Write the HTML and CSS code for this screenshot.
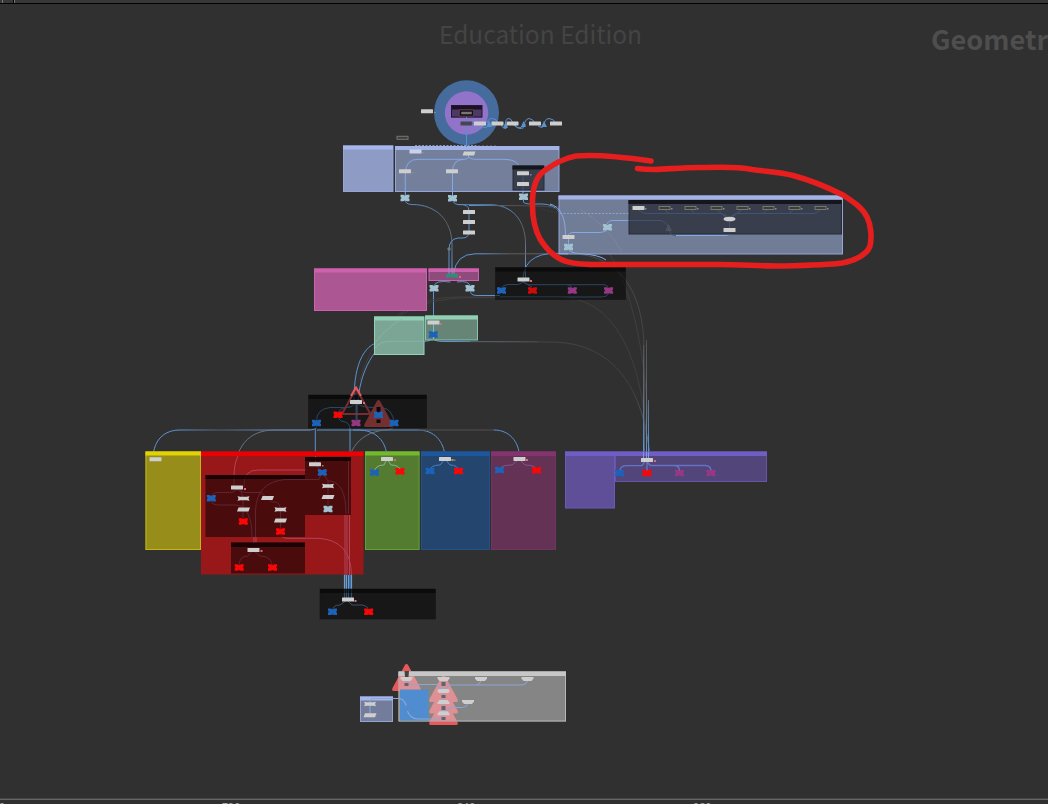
FILE: index.html
```
<!DOCTYPE html>
<html lang="en">
<head>
<meta charset="utf-8">
<title>Network editor</title>
<link rel="stylesheet" href="styles.css">
</head>
<body>
<main class="editor">
<svg class="network" viewBox="0 0 1048 804" width="1048" height="804">
  <defs>
    <rect id="n" x="-6" y="-2" width="12" height="4" rx=".5"/>
    <rect id="o" class="bypass" x="-5.5" y="-1.5" width="11" height="3"/>
    <path id="p" d="M-5-2H6.5L5 2H-6.5z"/>
    <path id="b" d="M-6-2.3L-3-1.7H3L6-2.3 5 0 6 2.3 3 1.7H-3L-6 2.3-5 0z"/>
    <path id="t" d="M-6-2H6V-.5L4 2H-4L-6-.5z"/>
    <path id="x" d="M-4.500-3.300H-1.700L0-2.300 1.700-3.300H4.500V-1L3.500 0 4.500 1V3.300H1.700L0 2.600-1.700 3.300H-4.500V1L-3.500 0-4.500-1z"/>
    <path id="tri" d="M0 0Q1 0 1.700 1.300L14 24Q15 27 13 27H-13Q-15 27-14 24L-1.700 1.300Q-1 0 0 0z"/>
    <linearGradient id="fade" gradientUnits="userSpaceOnUse" x1="453" y1="0" x2="568" y2="0"><stop offset="0" stop-color="#5f94d3"/><stop offset=".25" stop-color="#5f94d3"/><stop offset=".5" stop-color="#5b5b5b"/><stop offset="1" stop-color="#666"/></linearGradient>
    <linearGradient id="drop" x1="0" y1="0" x2="0" y2="1"><stop offset="0" stop-color="#5888be"/><stop offset=".06" stop-color="#5888be"/><stop offset=".3" stop-color="#5e5e5e"/><stop offset=".5" stop-color="#5e6a78"/><stop offset="1" stop-color="#6ba2df"/></linearGradient>
    <linearGradient id="far" x1="0" y1="0" x2="0" y2="1"><stop offset="0" stop-color="#4c4c4c"/><stop offset=".4" stop-color="#444"/><stop offset=".75" stop-color="#5f6a78"/><stop offset="1" stop-color="#6ba2df"/></linearGradient>
    <linearGradient id="bundle" gradientUnits="userSpaceOnUse" x1="0" y1="330" x2="0" y2="450"><stop offset="0" stop-color="#4c4c4c"/><stop offset=".5" stop-color="#60666e"/><stop offset="1" stop-color="#5b93d0"/></linearGradient>
    <linearGradient id="out" gradientUnits="userSpaceOnUse" x1="469" y1="0" x2="570" y2="0"><stop offset="0" stop-color="#5f94d3"/><stop offset=".4" stop-color="#555"/><stop offset="1" stop-color="#404040"/></linearGradient>
    <linearGradient id="arc" gradientUnits="userSpaceOnUse" x1="455" y1="0" x2="540" y2="0"><stop offset="0" stop-color="#5f94d3"/><stop offset=".6" stop-color="#5a6470"/><stop offset="1" stop-color="#404040"/></linearGradient>
    <linearGradient id="left" gradientUnits="userSpaceOnUse" x1="153" y1="0" x2="320" y2="0"><stop offset="0" stop-color="#5f94d3"/><stop offset=".15" stop-color="#5f94d3"/><stop offset=".4" stop-color="#56616e"/><stop offset=".75" stop-color="#5f94d3"/></linearGradient>
  </defs>

  <g class="chrome">
    <rect width="1048" height="3" fill="#383838"/>
    <path d="M2.500 0V3M14.500 0V3" stroke="#777"/>
    <path d="M13.500 0V3" stroke="#000"/>
    <rect y="3" width="1048" height="1" fill="#000"/>
    <rect y="798" width="1048" height="1" fill="#444"/>
    <rect y="799" width="1048" height="1" fill="#666"/>
    <rect y="800" width="1048" height="4" fill="#303030"/>
  </g>
  <text class="edition" x="439" y="44">Education Edition</text>
  <text class="context" x="931" y="50">Geometry</text>
  <g class="ruler"><text x="5" y="811" text-anchor="end">600</text><text x="222" y="811">720</text><text x="457" y="811">840</text><text x="693" y="811">960</text></g>

  <circle cx="466.500" cy="112.700" r="32.500" fill="#466b9d"/>
  <circle cx="466.500" cy="113" r="21.700" fill="#9273ca"/>
  <rect x="451" y="105.500" width="31" height="12" fill="#4d3968"/>
  <rect x="451" y="105.500" width="31" height="4" fill="#1b1024"/>
  <rect x="451.500" y="105.500" width="30.500" height="11.500" fill="none" stroke="#25152f"/>

  <g class="wire">
    <path d="M405 199Q405 204.500 412 204.500C436 204.500 452 220 452 245V274" stroke="url(#drop)"/>
    <path d="M452.500 199Q453 204 458 204.500Q469 203.500 469 211V232Q469 238 462 238H458Q449 239 449 250V275"/>
    <path d="M458 204.700H490C512 204.700 525.500 220 525.500 244V278" stroke="url(#drop)"/>
    <path d="M469 205.500Q520 205 570 207" stroke="url(#out)"/>
    <path d="M523.500 198V202Q524 204 532 204H542Q565 204 565.500 236"/>
    <path d="M542 206C610 214 648 300 649 458" class="faint"/>
    <path d="M540 208Q550 213.500 580 213.500" class="faint" stroke-dasharray="2 2"/>
    <path d="M453.500 274Q456 254 475 253.800H568" stroke="url(#fade)"/>
    <path d="M568 254Q525 249 523 278"/>
    <path d="M568 253.800C618 253 644 290 644 350V458" stroke="url(#far)"/>
    <path d="M450.500 282Q435 280 434 286M457 282Q470 280 470 287M433.500 288V334"/>
    <path d="M470 290Q470 295.500 477 295.500H500M500 297H600Q608 297 608.500 293"/>
    <path d="M501.500 290Q501 284.500 510 284.500H518Q522 284 523 281Q526 284 532 287M523 282Q526 284.700 530 284.700H567Q572 284.700 572 290M567 284.700H603Q608.500 284.700 608.500 290"/>
    <path d="M433 337Q433 341.500 443 341.500L538 341.700" stroke="url(#arc)"/>
    <path d="M470 341.600L550 342C615 342 644 390 650 458" stroke="url(#far)" class="thin"/>
    <path d="M433 337Q431 341.300 425 341.300H385C365 341.300 354 362 354 400"/>
    <path d="M405 325C378 342 361 365 358 401"/>
    <path d="M360 380C382 310 420 297.500 480 297.500H560C620 297.500 646 370 647 458" class="faint"/>
    <path d="M374 340Q404 298 455 297H500" class="faint"/>
    <path d="M316.500 422Q316 409 330 407.500H347Q354 407 355 402M356 404V423M338 414Q338 408 350 407M358 404Q362 407.500 375 407.500T378 414M375 407.500H382Q393 409 394 423"/>
    <path d="M338 416Q339 421 343 421.500Q350 422 350 430V590"/>
    <path d="M317 424Q317 430 310 430H180C164 430 154 440 153 457" stroke="url(#left)"/>
    <path d="M317 430H358C376 430 386 441 387 457M315.300 428V462M353 430H418C434 430 444 441 445 457"/>
    <path d="M418 430H494" stroke="#505050"/><path d="M494 430C509 430 519 441 519.500 457"/>
    <path d="M394 425Q394 430 384 430C356 434 346 452 345 485V590M310 430H275C248 430 234 447 234 480V486" stroke="#68727f"/>
    <path d="M346.500 575V598M348.500 575V598M351.500 575V598M344.500 575V598" class="bundle"/>
    <path d="M643.500 345V458M646.500 340V458M648.500 400V458" stroke="url(#bundle)"/>
  </g>

  <g class="box">
    <rect x="343.500" y="146" width="49.500" height="45.500" fill="#8e9cc5" stroke="#94a5d7"/>
    <rect x="343" y="145.500" width="50" height="4" fill="#a6b5eb"/>
    <rect x="395.500" y="146.500" width="163.500" height="45" fill="#747f9b" stroke="#94a5d7"/>
    <rect x="395" y="146" width="164" height="4" fill="#a4b3e7"/>
    <rect x="559" y="196" width="283.500" height="58" fill="#747f9b" fill-opacity=".97" stroke="#94a5d7"/>
    <rect x="558.500" y="195.500" width="284" height="4" fill="#a4b3e7"/>
  </g>
  <path d="M415 145.500H478" stroke="#8494bd" stroke-dasharray="2 1.500" stroke-width="1"/>
  <path d="M478 145.500H497" stroke="#555" stroke-dasharray="2 2"/>
  <g class="wire-on-panel">
    <path d="M466.500 117V147" stroke="#5790d0"/>
    <path d="M468.500 155V157Q468.500 159.300 463 159.300H418Q405.500 159 405.300 174V197M463 159.300Q452.500 160 452.500 172V197M468.500 157Q470 159.300 475 159.300H505Q519 160 519 168L523 173V197"/>
    <path d="M568.500 237V246M568.500 246V249Q570 253 580 253.500Q600 255 606 260M607.500 224Q608 220.500 613 220.500H629M607.500 229Q606 232.500 598 232.500H573Q568 233 568 236M550 204Q565.500 208 565.500 235M674 235.500H725Q729.500 235.500 729.500 232M568 253.500H559"/>
    <path d="M560 213.500H629" class="dashed"/>
    <path d="M580 209Q606 224 622 252" stroke="#7f879c"/>
  </g>
  <rect x="513" y="166" width="31" height="24" class="slate"/><rect x="512.500" y="165.500" width="31.500" height="4" fill="#14161d"/>
  <rect x="629" y="200.500" width="212.500" height="33.500" class="slate"/><rect x="628.500" y="200" width="213" height="4" fill="#15161c"/>
  <g class="inner-wire"><path d="M523 173V190"/><path d="M629 220.500H660Q667 221 669 230Q670 235.500 676 235.500"/><path d="M638.500 209Q641 213.500 646 213.500H722L729 219L736 213.500H814Q819 213 820.500 209M664 209L669 213.500M690 209L695 213.500M716 209L728 219M742.500 209L730 219M768 209L763 213.500M794 209L789 213.500M729.500 219V230M725 214L729 219L734 214"/></g>
  <path d="M668.500 224L672 231H665.500z" fill="#50525d"/>

  <g class="box">
    <rect x="314.500" y="269" width="112" height="41.500" fill="#ac5793" stroke="#d061b0"/><rect x="314" y="268.500" width="113" height="4" fill="#cf60ae"/>
    <rect x="429" y="269" width="49.500" height="11.500" fill="#8f4b7b" stroke="#cb63af"/><rect x="428.500" y="268.500" width="50.500" height="3.500" fill="#cf60ae"/>
    <rect x="374.500" y="317" width="49.500" height="37.500" fill="#7ba594" stroke="#91d3b7"/><rect x="374" y="316.500" width="50" height="4" fill="#91d0b5"/>
    <rect x="425.500" y="316" width="52" height="24" fill="#668577" stroke="#87c5ad"/><rect x="425" y="315.500" width="53" height="4" fill="#91d0b5"/>
  </g>
  <path d="M375 343Q386 328 402 319M375 348Q380 341.500 390 341.300H424" stroke="#8cb5ab" fill="none" stroke-width=".8"/>
  <path d="M433.500 321V339" stroke="#7fb9c4"/>
  <path d="M449 268V275M452 268V275M454 268V275" stroke="#a58cc4"/>

  <g class="comment dark">
    <rect x="495.500" y="267.500" width="130" height="32"/><rect x="495.500" y="267.500" width="130" height="4"/>
    <rect x="308.500" y="395" width="118" height="33"/><rect x="308.500" y="395" width="118" height="4"/>
    <rect x="320" y="589" width="115.500" height="30"/><rect x="320" y="589" width="115.500" height="4"/>
  </g>

  <path d="M356 388.500L342 414H370.500z" fill="none" stroke="#742e31" stroke-width="2"/>
  <path d="M351 396L356 387.500L361 396" fill="none" stroke="#e65a5e" stroke-width="2"/>
  <use href="#tri" x="378.500" y="400" fill="#742f31"/>
  <path d="M376.500 407H380.500V417H376.500zM376.500 419.500H380.500V423H376.500z" fill="#0a0a0a"/>

  <g>
    <rect x="145.500" y="451.500" width="55.500" height="98.500" fill="#968d1a"/><rect x="146" y="452" width="54.500" height="97.500" fill="none" stroke="#c3b80f"/><rect x="145.500" y="451.500" width="55.500" height="4" fill="#e1d304"/>
    <rect x="201" y="451.500" width="162.500" height="123" fill="#981719"/><rect x="201" y="451.500" width="162.500" height="4.500" fill="#eb0004"/>
    <rect x="365" y="451.500" width="54.500" height="98.500" fill="#537c31"/><rect x="365.500" y="452" width="53.500" height="97.500" fill="none" stroke="#659d35"/><rect x="365" y="451.500" width="54.500" height="4" fill="#73b82d"/>
    <rect x="421" y="451.500" width="69" height="98.500" fill="#24466e"/><rect x="421.500" y="452" width="68" height="97.500" fill="none" stroke="#225087"/><rect x="421" y="451.500" width="69" height="4.500" fill="#1c579d"/>
    <rect x="491" y="451.500" width="65" height="98.500" fill="#633255"/><rect x="491.500" y="452" width="64" height="97.500" fill="none" stroke="#703461"/><rect x="491" y="451.500" width="65" height="4.500" fill="#85336f"/>
    <rect x="565.500" y="452" width="49" height="56" fill="#5f4e98" stroke="#6c59b9"/><rect x="565" y="451.500" width="50" height="4.500" fill="#705dc5"/>
    <rect x="615.500" y="452" width="151" height="29.500" fill="#52457a" stroke="#6855a9"/><rect x="615" y="451.500" width="152" height="4.500" fill="#705dc5"/>
  </g>
  <g class="red-wire">
    <path d="M234 486V478Q234 463 238 456M244 487Q243 470 258 470H306M315.500 456V466M345 515V575M347 515V575M349.500 515V575M254 537V543M256 537V543M280 533Q281 538.300 288 538.300H318Q351 540 351.500 575"/>
  </g>
  <g class="comment maroon">
    <rect x="205.500" y="475" width="99.500" height="62"/><rect x="205.500" y="475" width="99.500" height="4"/>
    <rect x="305" y="457" width="46" height="58"/><rect x="305" y="457" width="46" height="4"/>
    <rect x="231" y="542.500" width="74" height="31"/><rect x="231" y="542.500" width="74" height="4.500"/>
  </g>
  <g class="maroon-wire">
    <path d="M237 489Q235 492.500 230 492.500H217Q211 493 211 499V501Q212 505 220 505H236Q252 507 252 537M237 489Q240 492.500 246 492.500H261L267 498L272 502H276Q280 503 280.500 510V531M240 487L243 498V521M255.500 537V510Q257 482 285 479.500H319L322 472L328 481H330Q346 483 346 514M328 481V509M239 566Q239 556 248 556L253 550L260 556Q272 556 272.500 567M315 464L322 472M348.500 461V514"/>
  </g>
  <g class="panel-wire">
    <path d="M374.500 472Q375 465 384 465L387 459L391 465Q400 465 400 471" stroke="#81b68d"/>
    <path d="M430 471Q430 465 440 465L445 459L450 465Q458 465 458.500 471" stroke="#4582c7"/>
    <path d="M499.500 470Q500 465 512 465L519 459L525 465Q536 465 536.500 470" stroke="#815493"/>
    <path d="M643.500 452V459M646.500 452V459M648.500 452V459" stroke="#7b9ae0"/>
    <path d="M620 471Q620 465.700 627 465.700H642L646 460M647 460V472M646 460L650 465.500H674Q679.500 465.500 679.500 471M674 465.500H705Q711 465.500 711 471" stroke="#6672c6" stroke-width="1.300"/>
    <path d="M332.500 611Q332.500 605 340 605L347 600L352 605H362Q368.500 606 368.500 611" stroke="#39516b"/>
    <path d="M357 403V420" stroke="#48536d"/>
  </g>

  <use href="#tri" x="406.500" y="664" fill="#e5595d"/>
  <use href="#tri" transform="translate(443.500 698)" fill="#e5595d"/>
  <rect x="398.500" y="671.500" width="167.500" height="50" fill="#858585"/><rect x="399" y="672" width="166.500" height="49" fill="none" stroke="#b5b5b5"/><rect x="398.500" y="671.500" width="167.500" height="4.500" fill="#c7c7c7"/>
  <clipPath id="gray"><rect x="398.500" y="676" width="167" height="45"/></clipPath>
  <g clip-path="url(#gray)" fill="#df9094"><use href="#tri" x="406.500" y="664"/><use href="#tri" x="443.500" y="675"/><use href="#tri" x="443.500" y="686.500"/><use href="#tri" x="443.500" y="698"/></g>
  <rect x="360.500" y="697" width="32" height="24.500" fill="#737d9b" stroke="#94a4cf"/><rect x="360" y="696.500" width="33" height="4" fill="#a5b5ee"/>
  <rect x="400" y="689.500" width="28.500" height="31" fill="#508dd0"/>
  <path d="M370 714V702Q370 698.500 375 698.500H400Q406 700 407 710Q410 719 418 719H437Q443 718 443.500 714M443.500 680V713M406.500 680Q407 684.500 413 684.500H437L443 691M481 680Q480 685 475 685H450L443 691M527.500 680Q527 685 520 685H475M468 703Q467 707.500 461 707.500H450L443 713" fill="none" stroke="#8aa7d5" stroke-width="1.100"/>
  <path d="M443.500 682V686M443.500 695V698M443.500 706V710M443.500 717V720M406.500 683V686" stroke="#62636c" stroke-width="4"/>
  <path d="M404.500 671H409L408.500 677H405z" fill="#444"/>
  <path d="M406.500 705L409.500 711H403.500z" fill="#568bcb"/>

  <g class="node">
    <use href="#n" x="427" y="111.200"/><use href="#n" x="466.500" y="123.500" fill="#47464c"/>
    <path d="M472 123Q474 117 477 121M472 124Q475 131 481 127M487 123Q488 118.500 492.500 118.500Q497 119 497.500 123M480 124Q483 129 487 127L490 124M501 124Q502 128.500 506 128.500Q504 120 508 118.500Q511 118 512.500 122M515 125Q516 128.500 521 128.500H520Q523 123 526 125M512 124Q518 129 523 128.300Q525 118.500 529 118.500Q533 119 535 123M538 126Q542 129 544 126Q544 119 549 118.500Q554 119 556 123" class="loop"/>
    <path d="M489 120L492 127H486.500zM505.500 122L508 128H503zM523.500 121L526 127H521zM544 121L547 127H541z" fill="#5b91cd"/>
    <use href="#n" x="480" y="123.500"/><use href="#n" x="497.500" y="123.500"/><use href="#n" x="512.500" y="123.500"/><use href="#n" x="535" y="123.500"/><use href="#n" x="556" y="123.500"/>
    <rect x="460.500" y="111" width="12" height="4" fill="#777" stroke="#17110f" stroke-width="1.500"/>
    <rect x="459" y="109.800" width="14.500" height="6.500" fill="none" stroke="#65404a" stroke-width=".7"/>
    <use href="#o" x="402.500" y="137.800"/>
    <use href="#n" x="415.500" y="151.500" fill="#cbd2ec"/><use href="#p" x="469" y="153.500"/><use href="#n" x="405" y="171.300"/><use href="#n" x="452" y="171.300"/><use href="#n" x="523" y="173.300"/><use href="#n" x="523" y="184"/>
    <use href="#n" x="638.500" y="208"/><use href="#o" x="664.500" y="208"/><use href="#o" x="690.500" y="208"/><use href="#o" x="716.500" y="208"/><use href="#o" x="742.500" y="208"/><use href="#o" x="768.500" y="208"/><use href="#o" x="794.500" y="208"/><use href="#o" x="820.500" y="208"/>
    <ellipse cx="729.500" cy="219" rx="6" ry="2.300"/><use href="#n" x="729.500" y="230"/><use href="#n" x="568.500" y="237"/>
    <use href="#n" x="469" y="212"/><use href="#n" x="469" y="222"/><use href="#n" x="469" y="232.500"/><circle cx="449" cy="249" r="1.700" fill="#777"/>
    <use href="#n" x="523.500" y="279.500"/><use href="#n" x="433.500" y="322.500"/><use href="#n" x="356" y="402"/>
    <use href="#n" x="155.500" y="459.300"/><use href="#n" x="387" y="459"/><use href="#n" x="445" y="459"/><use href="#n" x="519.500" y="459"/><use href="#n" x="647" y="460"/>
    <use href="#n" x="315" y="464.200"/><use href="#b" x="328" y="486"/><use href="#p" x="328" y="497"/>
    <use href="#n" x="237" y="487.500"/><use href="#b" x="243.500" y="498.500"/><use href="#p" x="243.500" y="509.500"/><use href="#p" x="267.500" y="498"/><use href="#b" x="280.500" y="509.500"/><use href="#p" x="280.500" y="520.500"/><use href="#n" x="253.500" y="550"/><use href="#n" x="348" y="599.500"/>
    <use href="#t" x="406.500" y="679"/><use href="#t" x="443.500" y="679"/><use href="#t" x="481" y="679"/><use href="#t" x="527.500" y="679"/><rect x="437.500" y="689" width="12" height="4" rx="2"/><use href="#t" transform="translate(443.500 702) scale(1 -1)"/><use href="#t" transform="translate(443.500 713.300) scale(1 -1)"/><use href="#t" x="468" y="702"/>
    <use href="#b" x="370" y="704"/><use href="#p" x="370" y="715.300"/>
    <path d="M447 273.500H457L458 275V277.500H446V275z" fill="#328b7b"/>
  </g>
  <g fill="#a3c2d1"><use href="#x" x="405" y="198"/><use href="#x" x="452.500" y="198.200"/><use href="#x" x="523.500" y="196.800"/><use href="#x" x="607.500" y="227.200"/><use href="#x" x="568.500" y="247"/><use href="#x" x="434" y="288.300"/><use href="#x" x="470" y="288.300"/><use href="#x" x="328" y="509"/></g>
  <g fill="#1b62b8"><use href="#x" x="501.500" y="290.500"/><use href="#x" x="433.300" y="334.500"/><use href="#x" x="316.500" y="423"/><use href="#x" x="378.500" y="414.800"/><use href="#x" x="394" y="423"/><use href="#x" x="374.500" y="472.500"/><use href="#x" x="430" y="471"/><use href="#x" x="499.500" y="470"/><use href="#x" x="322.300" y="472.500"/><use href="#x" x="211.300" y="498.200"/><use href="#x" x="332.500" y="611.800"/><use href="#x" x="619.500" y="473"/></g>
  <g fill="#fc0505"><use href="#x" x="532.500" y="290.500" fill="#d00a0a"/><use href="#x" x="338" y="414.700"/><use href="#x" x="400" y="471.300"/><use href="#x" x="458.500" y="471"/><use href="#x" x="536.500" y="470.200"/><use href="#x" x="243.300" y="521.500"/><use href="#x" x="280.500" y="531.500"/><use href="#x" x="239.200" y="567.500"/><use href="#x" x="272.500" y="567.500"/><use href="#x" x="368.700" y="611.800"/><use href="#x" x="647" y="473"/></g>
  <g fill="#963783"><use href="#x" x="572.300" y="290.500"/><use href="#x" x="608.600" y="290.500"/><use href="#x" x="356" y="423"/><use href="#x" x="679.500" y="473"/><use href="#x" x="711" y="473"/></g>
  <path class="flag error" d="M459 276h2v2h-2zM530 280h2v2h-2zM440 323h2v2h-2zM363 402h2v2h-2zM394 459h2v2h-2zM526 459h2v2h-2zM654 460h2v2h-2zM244 488h2v2h-2zM260.500 550h2v2h-2zM354.500 600h2v2h-2z"/>
  <path class="flag" d="M434 112h2v1h-2zM422 152h2v1.500h-2zM412 172h2v1.500h-2zM459 172h1.500v1.500h-1.500zM530 174h1.500v1.500h-1.500zM645 208h1.500v1.500h-1.500zM671 208h1.500v1.500h-1.500zM697 208h1.500v1.500h-1.500zM723 208h1.500v1.500h-1.500zM749 208h1.500v1.500h-1.500zM775 208h1.500v1.500h-1.500zM801 208h1.500v1.500h-1.500zM827 208h1.500v1.500h-1.500zM322 465h1.500v1.500h-1.500z"/>
  <path d="M451.500 459h2v2h-2z" fill="#b99c28"/><path d="M454 459.500h1.500v1.500H454z" fill="#6b7b8a"/>

  <path class="marker" d="M651 161C630 158 600 154 576 156C563 158 553 165 544 171C537 176 533 186 532.500 200C532 214 533 226 540 239C547 250 556 258 565 261C573 264 581 264 590 264.500H720C740 264.500 760 266 780 266C802 265.500 828 265 842 263C854 261 867 255 870 246C872 237 871 225 867 217C862 207 852 201 843 195C827 187 810 180 793 175.500C780 172 765 171.500 752 169.500C740 167 720 167 705 167.500C687 167 670 169 655 169.500Q645 169.500 637.500 168.500"/>
</svg>
</main>
</body>
</html>
```
FILE: styles.css
```
body {
  margin: 0;
  background: #303030;
  overflow: hidden;
}
.editor { width: 1048px; height: 804px; }
.network { display: block; font-family: "Noto Sans CJK SC", "Noto Sans", sans-serif; }
.edition { font-size: 24.5px; fill: #444; }
.context { font-size: 27.2px; font-weight: 700; fill: #4e4e4e; }
.ruler { font-size: 11px; fill: #aaa; }
.wire, .wire-on-panel, .inner-wire, .red-wire, .maroon-wire, .panel-wire { fill: none; stroke-width: 1; }
.wire { stroke: #5d91cd; }
.wire .faint { stroke: #424242; stroke-width: .8; }
.wire .thin { stroke-width: .7; }
.wire .bundle { stroke: #65a0df; stroke-width: 1.2; }
.wire-on-panel { stroke: #83aae8; }
.wire-on-panel .dashed { stroke: #8da4d3; stroke-dasharray: 2 1.5; }
.inner-wire { stroke: #405375; }
.red-wire { stroke: #ae4559; }
.maroon-wire { stroke: #612431; }
.slate { fill: #393e4d; stroke: #262a36; }
.dark rect { fill: #000; fill-opacity: .52; }
.dark rect:nth-child(odd) { stroke: #151515; stroke-width: .6; }
.maroon rect { fill: #000; fill-opacity: .52; }
.maroon rect:nth-child(even) { fill-opacity: .65; }
.node { fill: #cecece; }
.bypass { fill: #3d3d3c; stroke: #77776f; stroke-width: 1; }
.loop { fill: none; stroke: #5b91cd; stroke-width: 1; }
.flag { fill: #858993; }
.flag.error { fill: #d66e78; }
.marker { fill: none; stroke: #e61e1e; stroke-width: 5.6; stroke-linecap: round; stroke-linejoin: round; }
```
